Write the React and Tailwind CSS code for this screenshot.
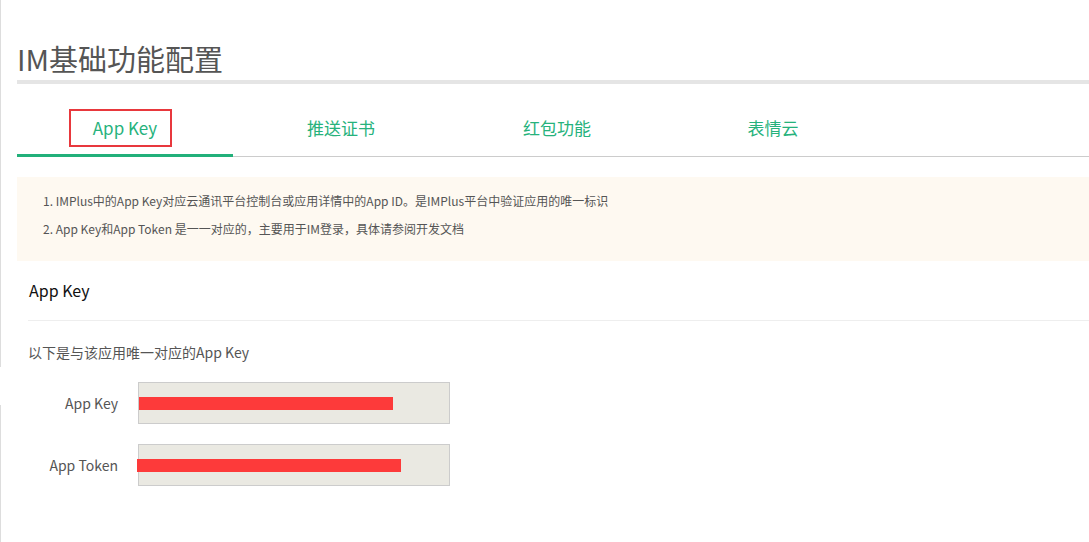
import React, { useState } from "react";

const tabs = ["App Key", "推送证书", "红包功能", "表情云"];

function KeyRow({ label, barWidth, shift }) {
  return (
    <div className="flex items-center">
      <div className="w-[90px] text-right text-[14px] text-[#555]">{label}</div>
      <div className="ml-[20px] w-[312px] h-[42px] bg-[#eae9e2] border border-[#cccccc] flex items-center">
        <div className={`h-[13px] bg-[#fd3a3a] ${shift ? "-ml-[2px]" : ""}`} style={{ width: barWidth }} />
      </div>
    </div>
  );
}

function App() {
  const [active, setActive] = useState(0);

  return (
    <div className="flex min-h-[542px] bg-white font-['Noto_Sans_CJK_SC','Noto_Sans',sans-serif]">
      <div className="w-px flex flex-col">
        <div className="h-[367px] bg-[#dddddd]" />
        <div className="h-[38px]" />
        <div className="flex-1 bg-[#dddddd]" />
      </div>

      <div className="flex-1 pl-4">
        <h1 className="mt-[43px] text-[29px] leading-[30px] text-[#555] font-normal">
          IM基础功能配置
        </h1>
        <div className="mt-[7px] h-[4px] bg-[#e5e5e5]" />

        <div className="mt-[21px] flex border-b border-[#cccccc]">
          {tabs.map((t, i) => (
            <button
              key={t}
              onClick={() => setActive(i)}
              className={`relative w-[216px] h-[52px] -mb-px flex items-center justify-center text-[17px] text-[#26b27c] ${
                i === active ? "border-b-[3px] border-[#22b07a] pb-[3px]" : "pb-[6px]"
              }`}
            >
              {t}
              {i === 0 && (
                <span className="absolute left-[52px] top-[4px] w-[103px] h-[38px] border-2 border-[#e8383d]" />
              )}
            </button>
          ))}
        </div>

        <div className="mt-[20px] h-[84px] bg-[#fef9f1] pl-[26px] pt-[10px] text-[12px] leading-[28px] text-[#555]">
          <p>1. IMPlus中的App Key对应云通讯平台控制台或应用详情中的App ID。是IMPlus平台中验证应用的唯一标识</p>
          <p>2. App Key和App Token 是一一对应的，主要用于IM登录，具体请参阅开发文档</p>
        </div>

        <div className="ml-[11px]">
          <div className="h-[60px] flex items-center pl-px pb-[2px] border-b border-[#eeeeee] text-[16px] text-[#111]">
            App Key
          </div>
          <p className="mt-[21px] text-[14px] leading-[20px] text-[#555]">
            以下是与该应用唯一对应的App Key
          </p>
          <div className="mt-[20px] flex flex-col gap-[20px]">
            <KeyRow label="App Key" barWidth={254} />
            <KeyRow label="App Token" barWidth={264} shift />
          </div>
        </div>
      </div>
    </div>
  );
}

export default App;
